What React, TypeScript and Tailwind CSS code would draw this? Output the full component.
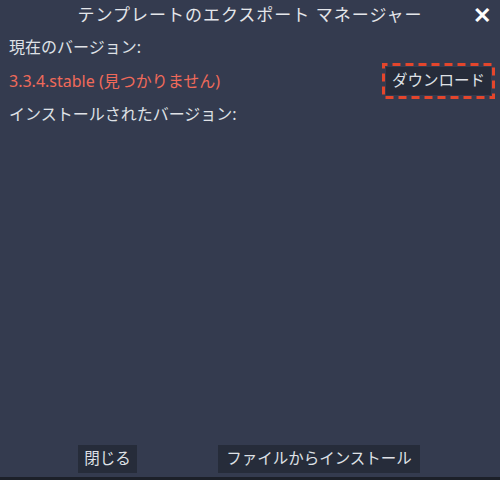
import React from "react";

export default function App() {
  const font = { fontFamily: '"Noto Sans", "Noto Sans CJK JP", sans-serif' };
  return (
    <div className="w-[500px] h-[480px] bg-[#343b4f] text-[#dfe1e6] flex flex-col overflow-hidden relative" style={font}>
      <div className="h-[30px] flex items-center justify-center relative text-[17px] tracking-[1px] text-[#e4e6ea]">
        <span>テンプレートのエクスポート マネージャー</span>
        <span className="absolute right-[9px] top-[3px] text-[22px] font-bold leading-none text-white tracking-normal">✕</span>
      </div>
      <div className="flex-1 flex flex-col px-[9px]">
        <div className="text-[16px] h-[33px] flex items-center">現在のバージョン:</div>
        <div className="flex items-center justify-between h-[36px]">
          <span className="text-[16px] text-[#f06a5a]">3.3.4.stable (見つかりません)</span>
          <div className="relative p-[4px] mr-[-4px]">
            <svg className="absolute inset-0 pointer-events-none" width="113" height="36" viewBox="0 0 113 36">
              <rect x="1.5" y="1.5" width="110" height="33" fill="none" stroke="#e4462c" strokeWidth="3" strokeDasharray="8 5" strokeDashoffset="4" />
            </svg>
            <div className="bg-[#262c3a] w-[105px] h-[28px] flex items-center justify-center text-[15.5px]">ダウンロード</div>
          </div>
        </div>
        <div className="text-[16px] h-[30px] flex items-center">インストールされたバージョン:</div>
      </div>
      <div className="flex items-start h-[36px] pt-[4px]">
        <div className="ml-[78px] w-[59px] bg-[#262c3a] h-[28px] flex items-center justify-center text-[15.5px]">閉じる</div>
        <div className="ml-[81px] w-[202px] bg-[#262c3a] h-[28px] flex items-center justify-center text-[15.5px]">ファイルからインストール</div>
      </div>
      <div className="h-[3px] bg-[#1c2029]" />
    </div>
  );
}
